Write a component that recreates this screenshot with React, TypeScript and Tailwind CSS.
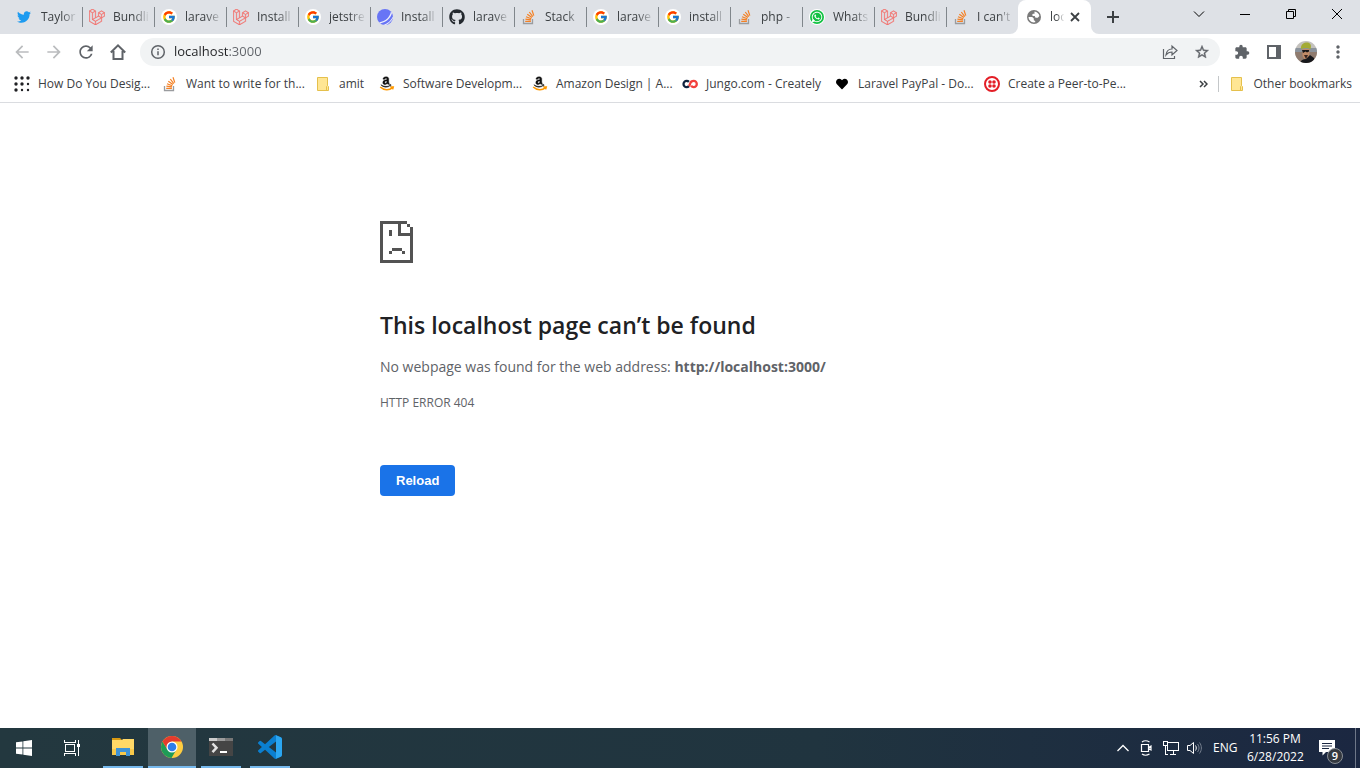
import type { ReactNode } from 'react';
import { useState } from 'react';
import {
  FaAmazon,
  FaGithub,
  FaHeart,
  FaLaravel,
  FaTwitter,
  FaWhatsapp,
} from 'react-icons/fa';
import { FcGoogle } from 'react-icons/fc';
import {
  MdArrowBack,
  MdArrowForward,
  MdExtension,
  MdMoreVert,
  MdRefresh,
  MdStarOutline,
} from 'react-icons/md';

const StackOverflow = () => (
  <svg viewBox="0 0 16 16" className="w-4 h-4" fill="none">
    <path d="M2.5 10v4.5h9V10" stroke="#9a9c9f" strokeWidth="1.3" />
    <path
      d="M4.2 12.4h5.7M4.4 10.1l5.6.8M5 7.7l5.3 2M6.3 5.2l4.6 3.4M8.3 3l3.5 4.6M11 1.2l1.8 5.4"
      stroke="#f48024"
      strokeWidth="1.2"
    />
  </svg>
);

const Laravel = () => <FaLaravel className="w-4 h-4 text-[#f56b67]" stroke="#f56b67" strokeWidth="12" />;

const Google = () => (
  <span className="w-4 h-4 rounded-full bg-white flex items-center justify-center">
    <FcGoogle className="w-3.5 h-3.5" />
  </span>
);

const Jetstream = () => (
  <svg viewBox="0 0 16 16" className="w-4 h-4">
    <circle cx="8" cy="8" r="8" fill="#6875f5" />
    <path d="M2 13.5C9 12 12.5 8.5 14 2.5l1 1.5C13.5 9.5 9.5 13 3 14.5zM6.5 16C11 14.5 14 11.5 16 7.5V9c-1.5 3-4 5.5-7 7z" fill="#eef0fb" />
  </svg>
);

const WhatsApp = () => (
  <svg viewBox="0 0 16 16" className="w-4 h-4">
    <circle cx="8" cy="8" r="8" fill="#fff" />
    <circle cx="8" cy="8" r="7" fill="#12c143" />
    <FaWhatsapp x="2" y="2" width="12" height="12" color="#fff" />
    <path d="M3.2 12.8l.8-3 2.200 2.200z" fill="#fff" />
  </svg>
);

const Amazon = () => (
  <svg viewBox="0 0 16 16" className="w-4 h-4">
    <FaAmazon x="1" y="0" width="13" height="13" color="#111" stroke="#111" strokeWidth="16" />
    <path d="M0 10c4 3 11 3 16-.3V15H0z" fill="#fff" />
    <path d="M1.2 11c4 3.6 9 3.6 12.2.7M11.5 11h2.7l-.6 2.4" stroke="#ff9900" strokeWidth="1.6" fill="none" />
  </svg>
);

const Creately = () => (
  <svg viewBox="0 0 16 16" className="w-4 h-4" fill="none" strokeWidth="2.3">
    <path d="M6.9 5.9A3.1 3.1 0 1 0 6.9 10.1" stroke="#10233f" />
    <path d="M6.9 10.1C7.8 9.2 8 8.5 8.3 7.3 8.7 5.7 10 4.9 11.7 4.9a3.1 3.1 0 0 1 0 6.2c-1.2 0-2-.5-2.6-1.3" stroke="#f2403c" />
  </svg>
);

const Twilio = () => (
  <svg viewBox="0 0 16 16" className="w-4 h-4" fill="#e31e26">
    <circle cx="8" cy="8" r="7" fill="none" stroke="#e31e26" strokeWidth="2" />
    <circle cx="6" cy="6" r="1.8" />
    <circle cx="10" cy="6" r="1.8" />
    <circle cx="6" cy="10" r="1.8" />
    <circle cx="10" cy="10" r="1.8" />
  </svg>
);

const Folder = () => (
  <svg viewBox="0 0 16 16" className="w-4 h-4" fill="#ffe694" stroke="#e5c04c">
    <path d="M2.5 1.5h10v8l1 1v4h-11z" />
    <path d="M11.5 14.5v-4l1-1" fill="none" />
  </svg>
);

const AppsGrid = () => (
  <svg viewBox="0 0 16 16" className="w-4 h-4" fill="#202124">
    {[2, 8, 14].map((y) =>
      [2, 8, 14].map((x) => <circle key={`${x}-${y}`} cx={x} cy={y} r={x + y > 20 ? 1.2 : 1.7} />)
    )}
  </svg>
);

const Globe = () => (
  <svg viewBox="0 0 16 16" className="h-4 w-4 shrink-0">
    <circle cx="8" cy="8" r="7" fill="#7a7a7a" />
    <path d="M8.5 2.5c2.5.3 4.5 2 4.900 4.500l-1.600 1.800H9.500L8.700 7H7l-1-1 1-1.200h1.500z" fill="#fff" />
    <path d="M2.5 8h3.700l1.600 1.500v1.700l1.400.8v1.300c-3.700.7-6.500-1.800-6.700-5.300z" fill="#fff" />
  </svg>
);

const tabs: { title: string; icon: ReactNode }[] = [
  { title: 'Taylor', icon: <FaTwitter className="w-3.5 h-4 text-[#1d9bf0]" /> },
  { title: 'Bundli', icon: <Laravel /> },
  { title: 'larave', icon: <Google /> },
  { title: 'Install', icon: <Laravel /> },
  { title: 'jetstre', icon: <Google /> },
  { title: 'Install', icon: <Jetstream /> },
  { title: 'larave', icon: <FaGithub className="w-4 h-4 text-[#24292f]" /> },
  { title: 'Stack', icon: <StackOverflow /> },
  { title: 'larave', icon: <Google /> },
  { title: 'install', icon: <Google /> },
  { title: 'php -', icon: <StackOverflow /> },
  { title: 'Whats', icon: <WhatsApp /> },
  { title: 'Bundli', icon: <Laravel /> },
  { title: "I can't", icon: <StackOverflow /> },
];

const bookmarks: { title: string; icon: ReactNode; width: string }[] = [
  { title: 'How Do You Desig...', icon: <AppsGrid />, width: 'w-[148px]' },
  { title: 'Want to write for th...', icon: <StackOverflow />, width: 'w-[153px]' },
  { title: 'amit', icon: <Folder />, width: 'w-16' },
  { title: 'Software Developm...', icon: <Amazon />, width: 'w-[153px]' },
  { title: 'Amazon Design | A...', icon: <Amazon />, width: 'w-[150px]' },
  { title: 'Jungo.com - Creately', icon: <Creately />, width: 'w-[152px]' },
  { title: 'Laravel PayPal - Do...', icon: <FaHeart className="w-3 h-3 text-black" />, width: 'w-[150px]' },
  { title: 'Create a Peer-to-Pe...', icon: <Twilio />, width: 'w-[150px]' },
];

function TabStrip() {
  return (
    <div className="flex h-[34px] bg-[#dee1e6] pl-[11px]">
      {tabs.map((tab, i) => (
        <button key={i} className="flex w-[72px] min-w-0 items-center pl-1.5 text-left">
          <span className="flex w-4 shrink-0">{tab.icon}</span>
          <span className="ml-2 flex-1 whitespace-nowrap text-[#3c4043] [mask-image:linear-gradient(to_right,black_50%,transparent_90%)]">
            {tab.title}
          </span>
          <span className={`h-5 w-px shrink-0 ${i < tabs.length - 1 ? 'bg-[#80868b]' : ''}`} />
        </button>
      ))}
      <div className="relative -ml-px flex w-[73px] items-center rounded-t-lg bg-white pl-2">
        <svg viewBox="0 0 8 8" className="absolute -left-2 bottom-0 h-2 w-2" fill="#fff">
          <path d="M8 0v8H0a8 8 0 0 0 8-8z" />
        </svg>
        <svg viewBox="0 0 8 8" className="absolute -right-2 bottom-0 h-2 w-2" fill="#fff">
          <path d="M0 0v8h8a8 8 0 0 1-8-8z" />
        </svg>
        <Globe />
        <span className="ml-2 w-4 whitespace-nowrap text-[#3c4043] [mask-image:linear-gradient(to_right,black_40%,transparent_90%)]">
          loc
        </span>
        <button aria-label="Close tab" className="ml-1">
          <svg viewBox="0 0 10 10" className="h-2.5 w-2.5" stroke="#3c4043" strokeWidth="1.8">
            <path d="M1 1l8 8M9 1L1 9" />
          </svg>
        </button>
      </div>
      <button aria-label="New tab" className="ml-4">
        <svg viewBox="0 0 12 12" className="h-3 w-3" stroke="#3c4043" strokeWidth="2">
          <path d="M0 6h12M6 0v12" />
        </svg>
      </button>
      <div className="ml-auto flex pb-1.5 text-black">
        <button aria-label="Search tabs" className="flex w-[46px] items-center justify-center">
          <svg viewBox="0 0 12 12" className="h-3 w-3" fill="none" stroke="currentColor">
            <path d="M1 3.5l5 5 5-5" />
          </svg>
        </button>
        <button aria-label="Minimize" className="flex w-[46px] items-center justify-center">
          <svg viewBox="0 0 10 10" className="h-2.5 w-2.5" stroke="currentColor">
            <path d="M0 5.5h10" />
          </svg>
        </button>
        <button aria-label="Restore" className="flex w-[46px] items-center justify-center">
          <svg viewBox="0 0 10 10" className="h-2.5 w-2.5" fill="none" stroke="currentColor">
            <path d="M.5 2.5h7v7h-7zM2.5 2.5v-2h7v7h-2" />
          </svg>
        </button>
        <button aria-label="Close" className="flex w-[46px] items-center justify-center">
          <svg viewBox="0 0 10 10" className="h-2.5 w-2.5" fill="none" stroke="currentColor">
            <path d="M0 0l10 10M10 0L0 10" />
          </svg>
        </button>
      </div>
    </div>
  );
}

function Avatar() {
  return (
    <svg viewBox="0 0 22 22" className="h-[22px] w-[22px] rounded-full">
      <rect width="22" height="22" fill="#c3c1bd" />
      <path d="M0 7h22v4H0z" fill="#8b939c" />
      <path d="M0 11h22v11H0z" fill="#8f7b6f" />
      <path d="M7.500 8h7v6l-2 4h-3l-2-3z" fill="#c08a66" />
      <path d="M6 8c-.5-5 3-6.500 6-6.500S17 4 15.500 8c-3-1.500-6-1.500-9.500 0z" fill="#a3ab35" />
      <path d="M7 9h7v1.500l-2 1-1.500-1L8 12z" fill="#18181a" />
      <path d="M9 14h4l-2 4z" fill="#3a2620" />
      <path d="M5 22c1-3 3-4 6-4l4-4 4 3 1 5z" fill="#17181c" />
    </svg>
  );
}

function Toolbar() {
  const [address, setAddress] = useState('localhost:3000');

  return (
    <div className="flex h-9 items-center pl-3 text-[#5f6368]">
      <div className="flex w-32 gap-3">
        <button aria-label="Back"><MdArrowBack className="h-5 w-5 text-[#babcbe]" /></button>
        <button aria-label="Forward"><MdArrowForward className="h-5 w-5 text-[#babcbe]" /></button>
        <button aria-label="Reload this page"><MdRefresh className="h-5 w-5" /></button>
        <button aria-label="Home">
          <svg viewBox="0 0 20 20" className="h-5 w-5" fill="none" stroke="currentColor" strokeWidth="2">
            <path d="M2.800 10.500L10 3.300l7.200 7.200M5.500 9v8h9V9" />
          </svg>
        </button>
      </div>
      <div className="flex h-7 flex-1 items-center rounded-full bg-[#f1f3f4] px-2.5">
        <svg viewBox="0 0 16 16" className="h-4 w-4 shrink-0" fill="none" stroke="currentColor" strokeWidth="1.5">
          <circle cx="8" cy="8" r="6.3" />
          <path d="M8 7.200v4M8 4.500v1.500" />
        </svg>
        {/* host is dark, port is grey */}
        <input
          type="text"
          aria-label="Address and search bar"
          value={address}
          onChange={(e) => setAddress(e.target.value)}
          className="ml-2 min-w-0 flex-1 bg-[linear-gradient(to_right,#202124_55px,#5f6368_55px)] bg-clip-text text-[13px] text-transparent outline-none"
        />
        <div className="flex items-center gap-4">
          <button aria-label="Share">
            <svg viewBox="0 0 16 16" className="h-4 w-4" fill="none" stroke="currentColor" strokeWidth="1.2">
              <path d="M1.500 5v9.500h11V12" />
              <path d="M4 11c.5-4 3-6 6-6V2l5 4.500-5 4.500V8C7.500 8 5.500 9 4 11z" />
            </svg>
          </button>
          <button aria-label="Bookmark this tab">
            <MdStarOutline className="h-4 w-4" stroke="currentColor" strokeWidth="0.6" />
          </button>
        </div>
      </div>
      <div className="flex items-center gap-2.5 px-[11px]">
        <button aria-label="Extensions" className="flex w-[22px] justify-center">
          <MdExtension className="h-4 w-4" />
        </button>
        <button aria-label="Side panel" className="flex w-[22px] justify-center">
          <svg viewBox="0 0 20 20" className="h-5 w-5" fill="none">
            <path d="M4 4h12v12H4z" stroke="currentColor" strokeWidth="2" />
            <path d="M12 4h4v12h-4z" fill="currentColor" />
          </svg>
        </button>
        <button aria-label="Profile"><Avatar /></button>
        <button aria-label="Menu" className="flex w-[22px] justify-center">
          <MdMoreVert className="h-5 w-5" />
        </button>
      </div>
    </div>
  );
}

function BookmarksBar() {
  return (
    <nav className="flex h-[33px] items-start border-b border-[#dadce0] pl-3.5 pr-2 text-[#3c4043]">
      {bookmarks.map((b) => (
        <a key={b.title} href="#" className={`flex h-7 shrink-0 items-center whitespace-nowrap ${b.width}`}>
          <span className="mr-2 flex w-4 justify-center">{b.icon}</span>
          {b.title}
        </a>
      ))}
      <button aria-label="More bookmarks" className="ml-auto h-7 px-2.5">
        <svg viewBox="0 0 9 8" className="h-2 w-[9px]" fill="none" stroke="#3c4043" strokeWidth="1.5">
          <path d="M1 1l3 3-3 3M5 1l3 3-3 3" />
        </svg>
      </button>
      <span className="mt-1.5 h-4 w-px bg-[#c4c7c9]" />
      <a href="#" className="flex h-7 items-center whitespace-nowrap pl-2.5">
        <span className="mr-2"><Folder /></span>
        Other bookmarks
      </a>
    </nav>
  );
}

function ErrorPage() {
  return (
    <main className="mx-auto w-full max-w-[600px] flex-1 pt-[118px] text-[#5f6368]">
      <svg viewBox="0 0 33 42" className="h-[42px] w-[33px]" fill="#535353" shapeRendering="crispEdges">
        <path d="M0 0h27v3H3v36h27V15H18V3h3v9h9V6h3v36H0z" />
        <path d="M27 3h3v3h-3z" />
        <path d="M9 9h3v6H9zM12 27h10v3H12zM9 30h3v3H9zM22 30h3v3h-3z" />
      </svg>
      <h1 className="mt-12 text-[23px] leading-7 font-semibold text-[#202124]">This localhost page can’t be found</h1>
      <p className="mt-4 text-sm leading-6">
        No webpage was found for the web address: <strong>http://localhost:3000/</strong>
      </p>
      <p className="mt-3 leading-6">HTTP ERROR 404</p>
      <button className="mt-[50px] h-[31px] rounded-sm bg-[#1a73e8] px-4 font-['Liberation_Sans'] text-[13px] font-bold text-white">
        Reload
      </button>
    </main>
  );
}

function Taskbar() {
  return (
    <footer className="flex h-10 items-center bg-linear-to-r from-[#23383f] via-[#20343f] via-60% to-[#1b2741] text-white">
      <button aria-label="Start" className="flex h-10 w-12 items-center justify-center">
        <svg viewBox="0 0 16 16" className="h-4 w-4" fill="#fff">
          <path d="M0 2.300L6.500 1.400v6.200H0zM7.300 1.300L16 0v7.600H7.300zM0 8.400h6.500v6.200L0 13.700zM7.300 8.400H16V16l-8.700-1.300z" />
        </svg>
      </button>
      <button aria-label="Task View" className="flex h-10 w-12 items-center justify-center">
        <svg viewBox="0 0 16 16" className="h-4 w-4" fill="none" stroke="#fff" shapeRendering="crispEdges">
          <path d="M.5 0v2.500h11V0M.5 16v-2.500h11V16M1.500 4.500h9v7h-9zM14.500 0v16" />
          <path d="M13 4h3v3h-3z" fill="#fff" stroke="none" />
        </svg>
      </button>
      <button aria-label="File Explorer" className="ml-[7px] flex h-10 w-10 items-center justify-center border-b-2 border-[#76b9ed]">
        <svg viewBox="0 0 22 18" className="h-[18px] w-[22px]">
          <path d="M0 0h8l2 2H0z" fill="#d99a12" />
          <path d="M0 2h10l1-1h11v16H0z" fill="#ffd867" />
          <path d="M0 11h22v6H0z" fill="#f8c94a" />
          <path d="M4 18v-8h14v8h-4v-4H8v4z" fill="#3f93d6" />
        </svg>
      </button>
      <button aria-label="Google Chrome" className="ml-[5px] flex h-10 w-12 items-center justify-center border-b-2 border-[#76b9ed] bg-[#4e6068]">
        <svg viewBox="0 0 22 22" className="h-[22px] w-[22px]">
          <circle cx="11" cy="11" r="11" fill="#ffcd40" />
          <path d="M1.500 5.500A11 11 0 0 0 10.500 22l5-8.500-9 0z" fill="#1e9b57" />
          <path d="M1.500 5.500A11 11 0 0 1 20.500 5.500H11L6.500 13.500z" fill="#e33b2e" />
          <circle cx="11" cy="11" r="5.5" fill="#fff" />
          <circle cx="11" cy="11" r="4.3" fill="#2f7de9" />
        </svg>
      </button>
      <button aria-label="Terminal" className="ml-[5px] flex h-10 w-10 items-center justify-center border-b-2 border-[#76b9ed]">
        <svg viewBox="0 0 24 18" className="h-[18px] w-6">
          <path d="M0 0h24v18H0z" fill="#454545" />
          <path d="M0 0h8v3H0z" fill="#ccc" />
          <path d="M8 0h8v3H8z" fill="#9b9b9b" />
          <path d="M16 0h8v3h-8z" fill="#777" />
          <path d="M3.500 5.500l4 4.300-4 4.300" fill="none" stroke="#e2e2e2" strokeWidth="2.5" />
          <path d="M11 13h7v2h-7z" fill="#fff" />
        </svg>
      </button>
      <button aria-label="Visual Studio Code" className="ml-[9px] flex h-10 w-10 items-center justify-center border-b-2 border-[#76b9ed]">
        <svg viewBox="0 0 24 24" className="h-6 w-6">
          <path
            d="M23.150 2.587L18.210.210a1.494 1.494 0 0 0-1.705.290l-9.460 8.630-4.120-3.128a1 1 0 0 0-1.276.057L.327 7.261A1 1 0 0 0 .326 8.740L3.899 12 .326 15.260a1 1 0 0 0 .001 1.479L1.650 17.940a1 1 0 0 0 1.276.057l4.120-3.128 9.460 8.630a1.492 1.492 0 0 0 1.704.290l4.942-2.377A1.500 1.500 0 0 0 24 20.060V3.939a1.500 1.500 0 0 0-.850-1.352zm-5.146 14.861L10.826 12l7.178-5.448v10.896z"
            fill="#0b7fd0"
          />
          <path d="M18 .2l5.200 2.400.8 1.400v16l-.8 1.400L18 23.800z" fill="#2ba6f1" />
        </svg>
      </button>
      <div className="ml-auto flex items-center">
        <button aria-label="Show hidden icons">
          <svg viewBox="0 0 12 12" className="h-3 w-3" fill="none" stroke="#fff" strokeWidth="1.3">
            <path d="M.5 9L6 3.500 11.500 9" />
          </svg>
        </button>
        <svg viewBox="0 0 16 16" className="ml-2.5 h-4 w-4" fill="none" stroke="#fff" strokeWidth="1.2">
          <path d="M2.500 4.500h7v7h-7zM9.500 7.500l2.500-1.500v4l-2.500-1.500M3 2c2-1.500 5-1.500 7.500 0M3 14c2 1.500 5 1.500 7.500 0" />
        </svg>
        <svg viewBox="0 0 16 16" className="ml-2 h-4 w-4" fill="none" stroke="#fff" shapeRendering="crispEdges">
          <path d="M4.500 2.500h11v8h-11zM10 11v3.500M7 14.500h6M.5 1.500h4v4h-4zM2.500 6v8.500h2" />
        </svg>
        <svg viewBox="0 0 16 16" className="ml-2 h-4 w-4" fill="none" stroke="#fff">
          <path d="M.5 5.500h2.500l3.500-3v11l-3.500-3H.5zM8.500 5.500c1 1.500 1 3.500 0 5" />
          <path d="M10.500 4c2 2.500 2 5.500 0 8M12.500 2.500c2.500 3.500 2.500 7.500 0 11" stroke="#76808f" />
        </svg>
        <span className="ml-2.5 w-6">ENG</span>
        <div className="ml-2.5 w-14 text-center leading-[18px] whitespace-nowrap">
          <div>11:56 PM</div>
          <div>6/28/2022</div>
        </div>
        <button aria-label="Notifications" className="relative ml-4 h-6 w-6">
          <svg viewBox="0 0 16 16" className="h-4 w-4" fill="#fff">
            <path d="M0 0h16v12H7l-3.500 3.500V12H0z" />
            <path d="M3 3.500h10M3 6h10M3 8.500h7" stroke="#1b2741" />
          </svg>
          <span className="absolute top-3 left-2 h-4 w-4 rounded-full border border-[#8a8f96] bg-[#33383f] text-center text-[11px] leading-[14px] font-semibold">
            9
          </span>
        </button>
        <span className="ml-3 h-10 w-px bg-[#6e7788]" />
        <span className="w-1" />
      </div>
    </footer>
  );
}

export default function App() {
  return (
    <div className="flex min-h-screen flex-col bg-white font-['Open_Sans','Noto_Sans',sans-serif] text-xs">
      <header>
        <TabStrip />
        <Toolbar />
        <BookmarksBar />
      </header>
      <ErrorPage />
      <Taskbar />
    </div>
  );
}
